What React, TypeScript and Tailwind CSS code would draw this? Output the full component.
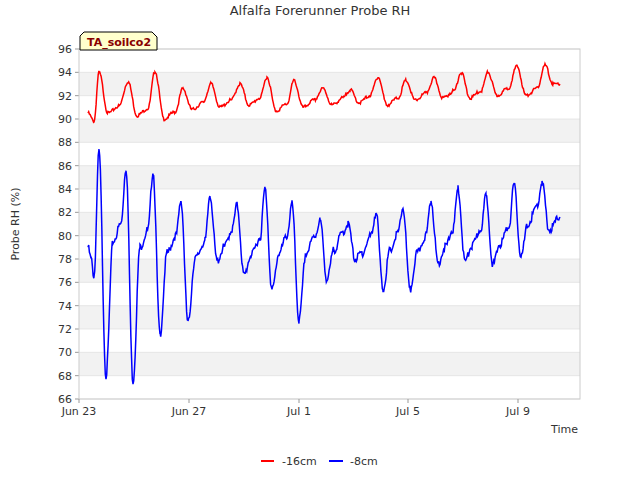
import React from 'react';

const X0 = 79, X1 = 580, Y0 = 49, Y1 = 399;
const yOf = (v: number) => Y0 + ((96 - v) * (Y1 - Y0)) / 30;

// deterministic noise
const noise = (i: number, a: number) => Math.sin(i * 12.9898) * 43758.5453 % 1 * a;

function build(keys: [number, number][], amp: number) {
  const pts: string[] = [];
  let n = 0;
  for (let k = 0; k < keys.length - 1; k++) {
    const [xa, va] = keys[k];
    const [xb, vb] = keys[k + 1];
    for (let x = xa; x < xb; x += 0.7) {
      const t = (x - xa) / (xb - xa);
      const s = (1 - Math.cos(Math.PI * t)) / 2;
      const v = va + (vb - va) * s + noise(n++, amp);
      pts.push(`${x.toFixed(1)},${yOf(v).toFixed(1)}`);
    }
  }
  const [lx, lv] = keys[keys.length - 1];
  pts.push(`${lx},${yOf(lv).toFixed(1)}`);
  return pts.join(' ');
}

const redPeaks: [number, number][] = [[99, 94], [128, 93.2], [155, 94.1], [183, 92.6], [211, 93], [240, 93], [267, 93.6], [294, 93.3], [323, 92.6], [350, 92.5], [378, 93.6], [406, 93.3], [434, 93.5], [461, 94], [488, 94], [517, 94.5], [545, 94.6]];
const redTroughs = [90.5, 90.3, 90, 90.8, 91, 91.2, 90.7, 91, 91.2, 91.4, 91.2, 91.6, 91.8, 91.8, 92, 92, 93];
const redKeys: [number, number][] = [[88, 90.5], [94, 89.8]];
redPeaks.forEach(([x, v], i) => {
  redKeys.push([x, v]);
  const t = redTroughs[i];
  if (i < redPeaks.length - 1) {
    redKeys.push([x + 9, t]);
    redKeys.push([x + 20, t + 0.6]);
  } else {
    redKeys.push([x + 8, 93]);
    redKeys.push([560, 93]);
  }
});

const bluePeaks: [number, number][] = [[99, 87.2], [126, 85.8], [153, 85.5], [181, 83], [210, 83.5], [237, 82.6], [265, 84], [292, 82.7], [320, 81.3], [348, 81], [376, 82], [403, 82.4], [431, 83], [458, 84], [486, 83.4], [514, 84.3], [542, 84.5]];
const blueTroughs = [68, 67.5, 71.5, 72.5, 77.8, 76.6, 75.3, 72.7, 76.2, 78, 75.4, 75.3, 77.6, 77.8, 77.5, 78.2, 80.5];
const bluePlateau = [81, 80.5, 80, 79.5, 80.5, 79.8, 80, 80, 80.3, 80, 80.2, 80, 80.5, 80.6, 80.8, 82.5];
const blueKeys: [number, number][] = [[88, 79], [91, 78], [94, 76.5]];
bluePeaks.forEach(([x, v], i) => {
  blueKeys.push([x, v]);
  blueKeys.push([x + 7, blueTroughs[i]]);
  if (i < bluePeaks.length - 1) {
    blueKeys.push([x + 14, bluePlateau[i] - 1.5]);
    blueKeys.push([bluePeaks[i + 1][0] - 5, bluePlateau[i]]);
  } else {
    blueKeys.push([560, 81.6]);
  }
});

const redPts = build(redKeys, 0.15);
const bluePts = build(blueKeys, 0.35);

const yTicks = Array.from({ length: 16 }, (_, i) => 66 + i * 2);
const xTicks: [number, string][] = [[79, 'Jun 23'], [189, 'Jun 27'], [299, 'Jul 1'], [408, 'Jul 5'], [518, 'Jul 9']];

export default function App() {
  return (
    <div className="w-[640px] h-[480px] bg-white flex flex-col" style={{ fontFamily: '"DejaVu Sans", sans-serif' }}>
      <svg width="640" height="480" className="block">
        <text x="320" y="15" textAnchor="middle" fontSize="13" fill="#333">Alfalfa Forerunner Probe RH</text>
        {yTicks.filter(v => v % 4 === 0 && v < 96).map(v => (
          <rect key={v} x={X0} y={yOf(v + 2)} width={X1 - X0} height={yOf(v) - yOf(v + 2)} fill="#f2f2f2" />
        ))}
        {yTicks.map(v => (
          <g key={v}>
            <line x1={X0} x2={X1} y1={yOf(v)} y2={yOf(v)} stroke="#e0e0e0" strokeWidth="0.7" />
            <line x1={X0 - 4} x2={X0} y1={yOf(v)} y2={yOf(v)} stroke="#999" />
            <text x={X0 - 7} y={yOf(v) + 4} textAnchor="end" fontSize="11" fill="#333">{v}</text>
          </g>
        ))}
        <rect x={X0} y={Y0} width={X1 - X0} height={Y1 - Y0} fill="none" stroke="#ccc" />
        {xTicks.map(([x, l]) => (
          <g key={l}>
            <line x1={x} x2={x} y1={Y1} y2={Y1 + 4} stroke="#999" />
            <text x={x} y={Y1 + 16} textAnchor="middle" fontSize="11" fill="#333">{l}</text>
          </g>
        ))}
        <text x="578" y="433" textAnchor="end" fontSize="11" fill="#333">Time</text>
        <text x="19" y="224" textAnchor="middle" fontSize="11" fill="#333" transform="rotate(-90 19 224)">Probe RH (%)</text>
        <polyline points={redPts} fill="none" stroke="#ff0000" strokeWidth="1.5" />
        <polyline points={bluePts} fill="none" stroke="#0000ff" strokeWidth="1.5" />
        <path d="M80 36 L84 32 L152 32 L157 37 L157 50 L80 50 Z" fill="#ffffcc" stroke="#000" strokeWidth="1" />
        <text x="87" y="46" fontSize="11" fontWeight="bold" fill="#880000">TA_soilco2</text>
        <line x1="261" x2="274" y1="461" y2="461" stroke="#ff0000" strokeWidth="2" />
        <text x="282" y="465" fontSize="11" fill="#333">-16cm</text>
        <line x1="329" x2="343" y1="461" y2="461" stroke="#0000ff" strokeWidth="2" />
        <text x="350" y="465" fontSize="11" fill="#333">-8cm</text>
      </svg>
    </div>
  );
}
